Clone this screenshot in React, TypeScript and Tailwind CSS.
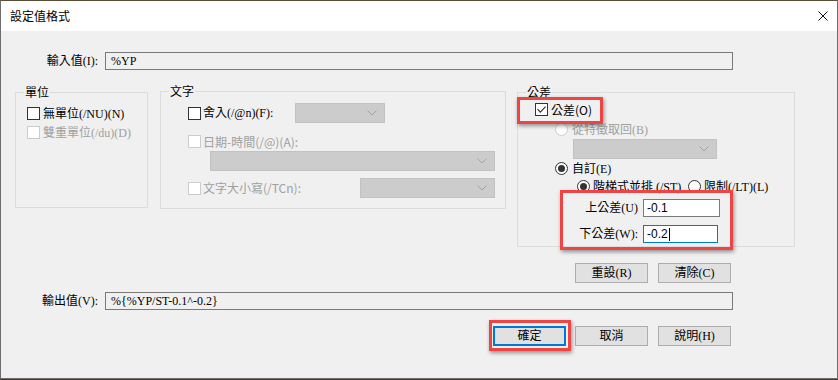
import React from 'react';

function CheckBox({ checked = false, disabled = false }: { checked?: boolean; disabled?: boolean }) {
  return (
    <span
      className={`flex h-[13px] w-[13px] shrink-0 items-center justify-center border bg-white ${
        disabled ? 'border-[#cccccc]' : 'border-[#333333]'
      }`}
    >
      {checked && (
        <svg width="11" height="11" viewBox="0 0 11 11" fill="none">
          <path d="M1.5 5.2l2.8 2.9L9.6 2.6" stroke="#333333" strokeWidth="1.2" />
        </svg>
      )}
    </span>
  );
}

function Radio({ checked = false, disabled = false }: { checked?: boolean; disabled?: boolean }) {
  return (
    <span
      className={`flex h-[13px] w-[13px] shrink-0 items-center justify-center rounded-full border bg-white ${
        disabled ? 'border-[#cccccc]' : 'border-[#333333]'
      }`}
    >
      {checked && <span className="h-[7px] w-[7px] rounded-full bg-[#333333]" />}
    </span>
  );
}

function Combo({ className = '' }: { className?: string }) {
  return (
    <div className={`flex h-[20px] shrink-0 items-center justify-end border border-[#c2c2c2] bg-[#cccccc] pr-[7px] ${className}`}>
      <svg width="10" height="6" viewBox="0 0 10 6" fill="none">
        <path d="M0.5 0.5l4.5 4.5 4.5-4.5" stroke="#a3a3a3" />
      </svg>
    </div>
  );
}

function Btn({ children, main = false, className = '' }: { children: React.ReactNode; main?: boolean; className?: string }) {
  return (
    <div
      className={`flex h-[20px] w-[73px] shrink-0 items-center justify-center bg-[#e1e1e1] ${
        main ? 'border-2 border-[#0078d7]' : 'border border-[#adadad]'
      } ${className}`}
    >
      {children}
    </div>
  );
}

function Group({ title, className = '', children }: { title: string; className?: string; children?: React.ReactNode }) {
  return (
    <div className={`relative shrink-0 border border-[#dcdcdc] ${className}`}>
      <span className="absolute left-[8px] -top-[9px] bg-[#f0f0f0] px-px leading-[16px] font-['Noto_Sans_CJK_TC',sans-serif]">
        {title}
      </span>
      {children}
    </div>
  );
}

export default function App() {
  return (
    <div className="h-[380px] w-[838px] bg-[#3d3b32] font-['Liberation_Serif','Noto_Sans_CJK_TC',serif] text-[12px] leading-[14px] text-black">
      <div className="relative h-[379px] w-[838px] border border-t-[#5b4e36] border-x-[#6e6e6e] border-b-[#6e6e6e] bg-[#f0f0f0]">
        {/* title bar */}
        <div className="flex h-[30px] items-center justify-between bg-white pl-[9px] pr-[9px]">
          <span className="font-['Noto_Sans_CJK_TC',sans-serif] text-[12px]">設定值格式</span>
          <svg width="10" height="10" viewBox="0 0 10 10" fill="none">
            <path d="M0.5 0.5l9 9M9.5 0.5l-9 9" stroke="#111111" strokeWidth="1" />
          </svg>
        </div>

        {/* input value */}
        <div className="mt-[21px] flex h-[18px] items-center">
          <span className="w-[97px] text-right">輸入值(I):</span>
          <div className="ml-[7px] flex h-[18px] w-[628px] items-center border border-[#7a7a7a] bg-[#f0f0f0] pl-[5px]">%YP</div>
        </div>

        {/* groups */}
        <div className="mt-[21px] flex items-start pl-[14px]">
          <Group title="單位" className="mt-px h-[116px] w-[133px]">
            <div className="flex flex-col gap-[6px] pl-[11px] pt-[14px]">
              <div className="flex h-[13px] items-center gap-[3px]">
                <CheckBox />
                <span>無單位(/NU)(N)</span>
              </div>
              <div className="flex h-[13px] items-center gap-[3px] text-[#a0a0a0]">
                <CheckBox disabled />
                <span>雙重單位(/du)(D)</span>
              </div>
            </div>
          </Group>

          <Group title="文字" className="ml-[12px] h-[118px] w-[346px]">
            <div className="flex flex-col">
              <div className="ml-[27px] mt-[11px] flex h-[20px] items-center">
                <CheckBox />
                <span className="ml-[2px] w-[92px]">舍入(/@n)(F):</span>
                <Combo className="w-[90px]" />
              </div>
              <div className="ml-[27px] mt-[12px] flex h-[13px] items-center text-[#a0a0a0]">
                <CheckBox disabled />
                <span className="ml-[2px] font-['Noto_Sans_CJK_TC',sans-serif]">日期-時間(/@)(A):</span>
              </div>
              <Combo className="ml-[49px] mt-[3px] w-[285px]" />
              <div className="ml-[27px] mt-[7px] flex h-[20px] items-center text-[#a0a0a0]">
                <CheckBox disabled />
                <span className="ml-[2px] w-[157px] font-['Noto_Sans_CJK_TC',sans-serif]">文字大小寫(/TCn):</span>
                <Combo className="w-[135px]" />
              </div>
            </div>
          </Group>

          <Group title="公差" className="ml-[11px] mt-px h-[155px] w-[278px]">
            <div className="flex flex-col">
              <div className="ml-[17px] mt-[10px] flex h-[13px] items-center gap-[3px]">
                <CheckBox checked />
                <span className="font-['Noto_Sans_CJK_TC',sans-serif]">公差(O)</span>
              </div>
              <div className="ml-[37px] mt-[7px] flex h-[13px] items-center gap-[4px] text-[#a0a0a0]">
                <Radio disabled />
                <span>從特徵取回(B)</span>
              </div>
              <Combo className="ml-[55px] mt-[3px] w-[144px]" />
              <div className="ml-[37px] mt-[3px] flex h-[13px] items-center gap-[4px]">
                <Radio checked />
                <span>自訂(E)</span>
              </div>
              <div className="ml-[59px] mt-[5px] flex h-[13px] items-center">
                <div className="flex w-[111px] items-center gap-[3px]">
                  <Radio checked />
                  <span>階梯式並排 (/ST)</span>
                </div>
                <div className="flex items-center gap-[3px]">
                  <Radio />
                  <span>限制(/LT)(L)</span>
                </div>
              </div>
              <div className="mt-[6px] flex h-[18px] items-center">
                <span className="w-[120px] text-right">上公差(U)</span>
                <div className="ml-[5px] flex h-[18px] w-[77px] items-center border border-[#7a7a7a] bg-white pl-[3px] font-['Liberation_Sans',sans-serif]">
                  -0.1
                </div>
              </div>
              <div className="mt-[8px] flex h-[18px] items-center">
                <span className="w-[120px] text-right">下公差(W):</span>
                <div className="ml-[5px] flex h-[18px] w-[75px] items-center border border-[#0078d7] bg-white pl-[3px] font-['Liberation_Sans',sans-serif]">
                  -0.2
                  <span className="ml-px h-[13px] w-px bg-black" />
                </div>
              </div>
            </div>
          </Group>
        </div>

        {/* reset / clear */}
        <div className="mt-[16px] flex gap-[10px] pl-[574px]">
          <Btn>重設(R)</Btn>
          <Btn>清除(C)</Btn>
        </div>

        {/* output value */}
        <div className="mt-[9px] flex h-[18px] items-center">
          <span className="w-[97px] text-right">輸出值(V):</span>
          <div className="ml-[7px] flex h-[18px] w-[628px] items-center border border-[#7a7a7a] bg-[#f0f0f0] pl-[5px]">
            %{'{'}%YP/ST-0.1^-0.2{'}'}
          </div>
        </div>

        {/* bottom buttons */}
        <div className="mt-[16px] flex pl-[492px]">
          <Btn main>確定</Btn>
          <Btn className="ml-[9px]">取消</Btn>
          <Btn className="ml-[10px]">說明(H)</Btn>
        </div>

        {/* red highlight marks */}
        <div className="absolute left-[516px] top-[96px] h-[27px] w-[86px] border-[3px] border-[#ef4444] shadow-[1px_2px_4px_rgba(0,0,0,0.4)]" />
        <div className="absolute left-[559px] top-[189px] h-[60px] w-[173px] border-[3px] border-[#ef4444] shadow-[1px_2px_4px_rgba(0,0,0,0.4)]" />
        <div className="absolute left-[488px] top-[319px] h-[31px] w-[82px] border-[3px] border-[#ef4444] shadow-[1px_2px_4px_rgba(0,0,0,0.4)]" />
      </div>
    </div>
  );
}
